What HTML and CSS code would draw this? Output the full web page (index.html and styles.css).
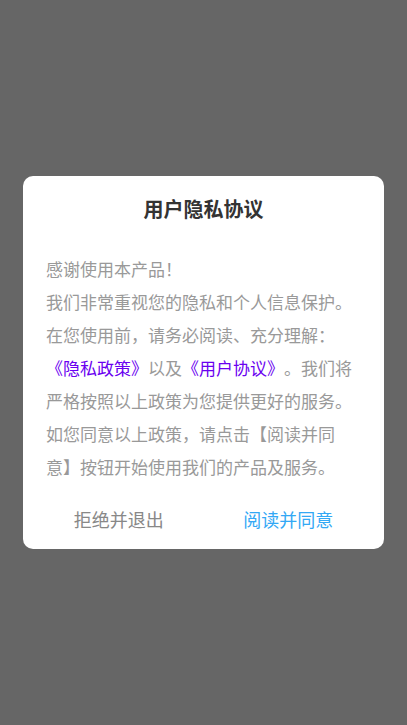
FILE: index.html
```html
<!DOCTYPE html>
<html lang="zh-CN">
<head>
<meta charset="utf-8">
<title>用户隐私协议</title>
<link rel="stylesheet" href="styles.css">
</head>
<body>
<div class="overlay">
  <div class="dialog">
    <h1 class="title">用户隐私协议</h1>
    <div class="content">
      <p class="para">感谢使用本产品！</p>
      <p class="para">我们非常重视您的隐私和个人信息保护。</p>
      <p class="para">在您使用前，请务必阅读、充分理解：<span class="link">《隐私政策》</span>以及<span class="link">《用户协议》</span>。我们将严格按照以上政策为您提供更好的服务。如您同意以上政策，请点击【阅读并同意】按钮开始使用我们的产品及服务。</p>
    </div>
    <div class="actions">
      <button class="btn btn-reject">拒绝并退出</button>
      <button class="btn btn-agree">阅读并同意</button>
    </div>
  </div>
</div>
</body>
</html>
```
FILE: styles.css
```css
html, body {
  margin: 0;
  padding: 0;
  height: 100%;
}
body {
  font-family: "Noto Sans CJK SC", "Noto Sans", sans-serif;
  background: #666666;
  text-spacing-trim: space-all;
}
.overlay {
  height: 100%;
  display: flex;
  align-items: center;
  justify-content: center;
}
.dialog {
  width: 361px;
  box-sizing: border-box;
  background: #ffffff;
  border-radius: 10px;
  padding: 20px 0 6px;
}
.title {
  margin: 0;
  font-size: 20px;
  line-height: 26px;
  font-weight: bold;
  color: #333333;
  text-align: center;
}
.content {
  margin-top: 30.5px;
  padding: 0 23px;
}
.para {
  margin: 0;
  font-size: 17px;
  line-height: 33px;
  color: #999999;
  text-spacing-trim: space-all;
  font-feature-settings: "fwid" 1;
}
.link {
  color: #6a00f0;
}
.actions {
  margin-top: 12px;
  padding: 0 11px;
  display: flex;
}
.btn {
  flex: 1;
  height: 48px;
  border: none;
  background: transparent;
  font-family: inherit;
  font-size: 18px;
  padding: 0;
}
.btn-reject {
  color: #888888;
}
.btn-agree {
  color: #33a8f5;
}
```
